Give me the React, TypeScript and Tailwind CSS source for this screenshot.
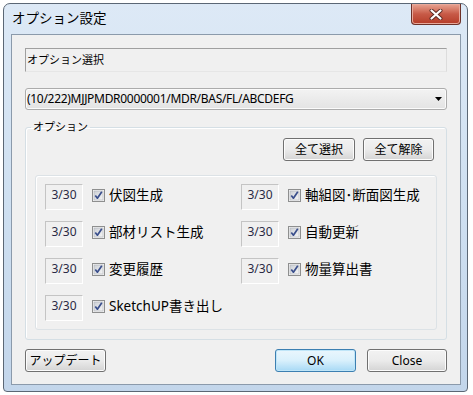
import React from "react";

function CheckBox() {
    return (
        <svg width="13" height="13" viewBox="0 0 13 13" className="shrink-0">
            <defs>
                <linearGradient id="cbg" x1="0" y1="0" x2="1" y2="1">
                    <stop offset="0" stopColor="#cbcfd5" />
                    <stop offset="1" stopColor="#f6f6f6" />
                </linearGradient>
            </defs>
            <rect x="0.5" y="0.5" width="12" height="12" fill="#f4f4f4" stroke="#8e8f8f" />
            <rect x="2" y="2" width="9" height="9" fill="url(#cbg)" stroke="#aeb3b9" strokeWidth="0.6" />
            <path d="M3.3 6.4 L5.4 9.2 L9.8 2.8" fill="none" stroke="#3a4f8c" strokeWidth="1.7" strokeLinejoin="round" />
        </svg>
    );
}

function OptionRow({ label }: { label: string }) {
    return (
        <div className="flex items-start h-[26px]">
            <div className="w-[38px] h-[26px] border-t border-l border-[#c4c4c4] border-r-white border-b-white border-r border-b text-center text-[12px] leading-[14px] pt-[3px] text-[#2a2a44]">
                3/30
            </div>
            <div className="ml-[9px] mt-[5px]">
                <CheckBox />
            </div>
            <span className="ml-[4px] text-[13.5px] leading-[22px] text-black whitespace-nowrap">{label}</span>
        </div>
    );
}

function WinButton({ label, w, primary }: { label: string; w: string; primary?: boolean }) {
    return (
        <button
            className={
                primary
                    ? "h-[23px] w-[81px] rounded-[3px] border border-[#3c7fb1] bg-gradient-to-b from-[#eaf6fd] via-[#d9f0fc] to-[#a7d9f5] text-[12px] text-black shadow-[inset_0_0_0_1px_#bfe5f8]"
                    : w + " h-[23px] rounded-[3px] border border-[#707070] bg-gradient-to-b from-[#f2f2f2] via-[#ebebeb] to-[#d4d4d4] text-[12px] text-black shadow-[inset_0_0_0_1px_#fcfcfc]"
            }
        >
            {label}
        </button>
    );
}

export default function App() {
    const left = ["伏図生成", "部材リスト生成", "変更履歴", "SketchUP書き出し"];
    const right = ["軸組図･断面図生成", "自動更新", "物量算出書"];

    return (
        <div className="w-[473px] h-[395px] bg-white pt-[3px] pl-[3px] font-['Noto_Sans','Noto_Sans_CJK_JP',sans-serif]">
            <div className="w-[465px] h-[389px] rounded-t-[7px] rounded-b-[4px] border border-[#5b6775] bg-gradient-to-b from-[#dde9f6] via-[#cfe0f1] to-[#c3d6eb] flex flex-col pl-[7px] pr-[6px] pb-[6px]">
                {/* title bar */}
                <div className="h-[30px] flex justify-between items-start">
                    <span className="mt-[4px] ml-[1px] text-[13.5px] leading-[20px] text-black">オプション設定</span>
                    <div className="w-[50px] h-[21px] rounded-b-[4px] border border-t-0 border-[#6d3128] bg-gradient-to-b from-[#e8a493] via-[#c75a47] to-[#b53b27] flex items-center justify-center shadow-[inset_0_0_0_1px_#e7a99b]">
                        <svg width="14" height="11" viewBox="0 0 14 11">
                            <path d="M2.5 1.5 L11.5 9.5 M11.5 1.5 L2.5 9.5" stroke="#5a2b24" strokeWidth="4" strokeLinecap="round" />
                            <path d="M2.5 1.5 L11.5 9.5 M11.5 1.5 L2.5 9.5" stroke="#ffffff" strokeWidth="2.2" strokeLinecap="round" />
                        </svg>
                    </div>
                </div>

                {/* client area */}
                <div className="flex-1 border border-[#8b9aab] bg-[#f0f0f0] px-[13px] pt-[13px] flex flex-col">
                    <div className="h-[24px] border border-t-[#9f9f9f] border-l-[#9f9f9f] border-r-[#dcdcdc] border-b-[#e6e6e6] text-[11px] leading-[22px] text-black pl-[1px]">
                        オプション選択
                    </div>

                    <div className="mt-[16px] h-[22px] rounded-[3px] border border-[#acacac] bg-gradient-to-b from-[#f3f3f3] to-[#e3e3e3] flex items-center justify-between pl-[1px] pr-[4px] shadow-[inset_0_0_0_1px_#fbfbfb]">
                        <span className="text-[12px] text-black tracking-[-0.3px]">(10/222)MJJPMDR0000001/MDR/BAS/FL/ABCDEFG</span>
                        <svg width="7" height="4" viewBox="0 0 7 4">
                            <path d="M0 0 H7 L3.5 4 Z" fill="#000" />
                        </svg>
                    </div>

                    <fieldset className="mt-[10px] rounded-[3px] border border-[#d5dfe5] shadow-[inset_1px_1px_0_#ffffff] pl-[9px] pr-[9px] pb-[9px]">
                        <legend className="-ml-[4px] px-[2px] text-[11px] leading-[14px] text-black">オプション</legend>
                        <div className="flex justify-end gap-[8px] mt-[4px] pr-[3px]">
                            <WinButton label="全て選択" w="w-[72px]" />
                            <WinButton label="全て解除" w="w-[71px]" />
                        </div>
                        <div className="mt-[14px] rounded-[3px] border border-[#dce2e6] shadow-[inset_1px_1px_0_#ffffff] pl-[9px] pt-[8px] pb-[8px] grid grid-cols-[196px_1fr] gap-y-[11px]">
                            <OptionRow label={left[0]} />
                            <OptionRow label={right[0]} />
                            <OptionRow label={left[1]} />
                            <OptionRow label={right[1]} />
                            <OptionRow label={left[2]} />
                            <OptionRow label={right[2]} />
                            <OptionRow label={left[3]} />
                        </div>
                    </fieldset>

                    <div className="mt-[9px] flex items-center">
                        <WinButton label="アップデート" w="w-[81px]" />
                        <div className="flex-1" />
                        <WinButton label="OK" w="w-[81px]" primary />
                        <div className="w-[11px]" />
                        <WinButton label="Close" w="w-[80px]" />
                    </div>
                </div>
            </div>
        </div>
    );
}
